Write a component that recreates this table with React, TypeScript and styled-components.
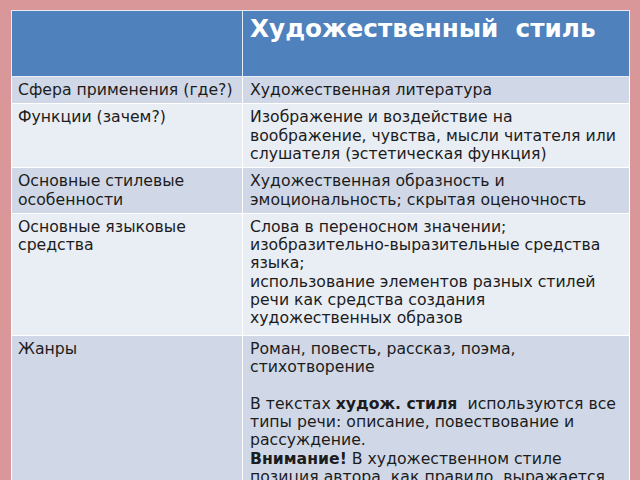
import React from 'react';
import styled, { createGlobalStyle } from 'styled-components';

const GlobalStyle = createGlobalStyle`
  html, body {
    margin: 0;
    padding: 0;
    background: #d9979a;
    font-family: 'DejaVu Sans', 'Noto Sans', sans-serif;
  }
`;

const Page = styled.div`
  width: 640px;
  height: 480px;
  overflow: hidden;
  padding: 10px 0 0 11px;
  box-sizing: border-box;
`;

const Table = styled.table`
  width: 618px;
  border-collapse: collapse;
  table-layout: fixed;
  font-size: 15.7px;
  line-height: 18.3px;
  color: #1c1c1c;
`;

const Row = styled.tr<{ $h: number; $shade?: boolean }>`
  height: ${(p) => p.$h}px;
  background: ${(p) => (p.$shade ? '#d0d8e8' : '#e9edf4')};
`;

const HeadRow = styled.tr`
  height: 66px;
  background: #4f81bd;
`;

const HeadCell = styled.th`
  border: 1px solid #e8ecf4;
  padding: 4px 7px;
  vertical-align: top;
  text-align: left;
  color: #ffffff;
  font-size: 24.7px;
  line-height: 28px;
  font-weight: bold;
  white-space: pre;
`;

const Cell = styled.td<{ $first?: boolean }>`
  border: 1px solid #ffffff;
  padding: ${(p) => (p.$first ? '4px 2px 4px 6px' : '4px 3px 4px 7px')};
  vertical-align: top;
  white-space: pre-wrap;
`;

const Gap = styled.div`
  height: 18.3px;
`;

export default function App() {
  return (
    <>
      <GlobalStyle />
      <Page>
        <Table>
          <colgroup>
            <col style={{ width: 231 }} />
            <col style={{ width: 387 }} />
          </colgroup>
          <tbody>
            <HeadRow>
              <HeadCell />
              <HeadCell>Художественный  стиль</HeadCell>
            </HeadRow>
            <Row $h={26} $shade>
              <Cell $first>Сфера применения (где?)</Cell>
              <Cell>Художественная литература</Cell>
            </Row>
            <Row $h={64}>
              <Cell $first>Функции (зачем?)</Cell>
              <Cell>
                Изображение и воздействие на воображение, чувства, мысли читателя или слушателя (эстетическая функция)
              </Cell>
            </Row>
            <Row $h={44} $shade>
              <Cell $first>Основные стилевые особенности</Cell>
              <Cell>Художественная образность и эмоциональность; скрытая оценочность</Cell>
            </Row>
            <Row $h={122}>
              <Cell $first>Основные языковые средства</Cell>
              <Cell>
                Слова в переносном значении;
                <br />
                изобразительно-выразительные средства языка;
                <br />
                использование элементов разных стилей речи как средства создания художественных образов
              </Cell>
            </Row>
            <Row $h={160} $shade>
              <Cell $first>Жанры</Cell>
              <Cell>
                Роман, повесть, рассказ, поэма, стихотворение
                <Gap />
                В текстах <b>худож. стиля</b>{'  '}используются все типы речи: описание, повествование и рассуждение.
                <br />
                <b>Внимание!</b> В художественном стиле позиция автора, как правило, выражается скрыто
              </Cell>
            </Row>
          </tbody>
        </Table>
      </Page>
    </>
  );
}
